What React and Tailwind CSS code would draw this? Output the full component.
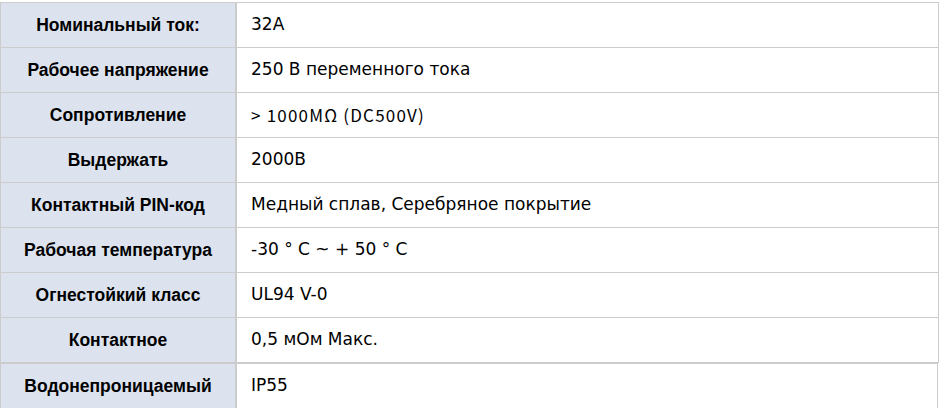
const rows = [
  ["Номинальный ток:", "32A"],
  ["Рабочее напряжение", "250 В переменного тока"],
  ["Сопротивление", "> 1000MΩ (DC500V)", true],
  ["Выдержать", "2000В"],
  ["Контактный PIN-код", "Медный сплав, Серебряное покрытие"],
  ["Рабочая температура", "-30 ° C ~ + 50 ° C"],
  ["Огнестойкий класс", "UL94 V-0"],
  ["Контактное", "0,5 мОм Макс."],
];

const Row = ({ label, value, jp }) => (
  <div className="flex h-[45px] border-b border-[#cccccc]">
    <div className="w-[236px] shrink-0 flex items-center justify-center bg-[#dce3ee] border-r-2 border-[#cccccc] font-['Liberation_Sans',Arial,sans-serif] font-bold text-[17.5px] text-black">
      {label}
    </div>
    <div
      className={
        "flex-1 flex items-center pl-[14px] text-[17px] text-black bg-white " +
        (jp
          ? "font-['Noto_Sans_CJK_JP','DejaVu_Sans',sans-serif] tracking-[1.2px]"
          : "font-['DejaVu_Sans',Verdana,sans-serif]")
      }
    >
      {value}
    </div>
  </div>
);

export default function App() {
  return (
    <div className="w-[942px] h-[408px] bg-white overflow-hidden pt-[2px]">
      <div className="w-[939px] border-l border-r border-t border-[#cccccc]">
        {rows.map(([l, v, jp]) => (
          <Row key={l} label={l} value={v} jp={jp} />
        ))}
      </div>
      <div className="w-[938px] border-l border-r border-t border-[#cccccc]">
        <Row label="Водонепроницаемый" value="IP55" />
      </div>
    </div>
  );
}
